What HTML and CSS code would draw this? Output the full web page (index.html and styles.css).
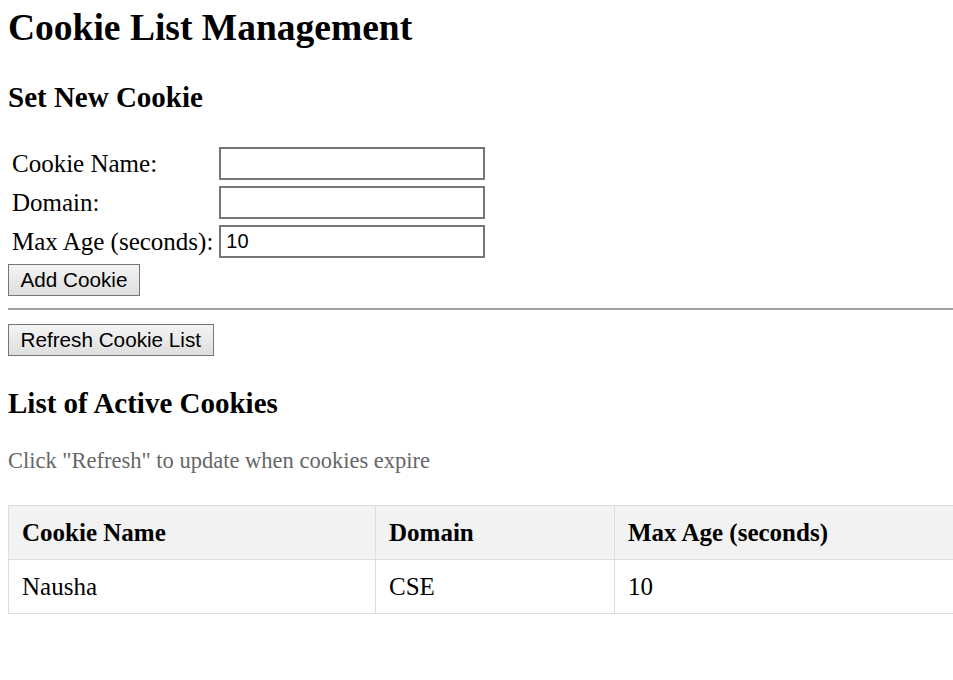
FILE: index.html
```html
<!DOCTYPE html>
<html>
<head>
<meta charset="utf-8">
<title>Cookie List Management</title>
<link rel="stylesheet" href="styles.css">
</head>
<body>
<h1 class="title">Cookie List Management</h1>
<h2 class="section">Set New Cookie</h2>
<form class="cookie-form">
  <table class="form-table">
    <tr><td class="label">Cookie Name:</td><td><input class="field" type="text"></td></tr>
    <tr><td class="label">Domain:</td><td><input class="field" type="text"></td></tr>
    <tr><td class="label">Max Age (seconds):</td><td><input class="field" type="text" value="10"></td></tr>
  </table>
  <div class="btn-row add-row"><button class="btn" type="button">Add Cookie</button></div>
</form>
<hr class="divider">
<div class="btn-row"><button class="btn" type="button">Refresh Cookie List</button></div>
<h2 class="section list-title">List of Active Cookies</h2>
<p class="hint">Click "Refresh" to update when cookies expire</p>
<table class="cookie-table">
  <thead>
    <tr><th class="c1">Cookie Name</th><th class="c2">Domain</th><th>Max Age (seconds)</th></tr>
  </thead>
  <tbody>
    <tr><td>Nausha</td><td>CSE</td><td>10</td></tr>
  </tbody>
</table>
</body>
</html>
```
FILE: styles.css
```css
html { overflow: hidden; }
body {
  margin: 8px -40px 8px 8px;
  font-family: "Liberation Serif", "Times New Roman", serif;
  font-size: 25px;
  color: #000;
  background: #fff;
}
.title {
  font-size: 37.5px;
  font-weight: bold;
  margin: 0;
  line-height: 40px;
}
.section {
  font-size: 29px;
  font-weight: bold;
  margin: 32px 0 0;
  line-height: 34px;
}
.cookie-form { margin: 29px 0 0; }
.form-table {
  border-spacing: 2px;
  margin: 0;
}
.form-table td { padding: 2px; }
.label { line-height: 29px; padding-right: 4px; }
.field {
  display: block;
  width: 255px;
  height: 29px;
  box-sizing: content-box;
  border: 2px solid #767676;
  padding: 0 2px 0 5px;
  font-family: "Liberation Sans", Arial, sans-serif;
  font-size: 20px;
  margin: 0;
}
.btn-row { display: flex; }
.add-row { margin-top: 2px; }
.btn {
  font-family: "Liberation Sans", Arial, sans-serif;
  font-size: 20.7px;
  height: 32px;
  padding: 0 11.5px;
  border: 1px solid #767676;
  border-radius: 0;
  background: linear-gradient(#f4f4f4, #dedede);
  color: #000;
  margin: 0;
}
.divider {
  margin: 12px 0 14px;
  border: 0;
  border-top: 2px solid #a0a0a0;
}
.list-title { margin-top: 30px; }
.hint {
  color: #666;
  font-size: 22.5px;
  margin: 28px 0 0;
  line-height: 26px;
}
.cookie-table {
  margin-top: 31px;
  border-collapse: collapse;
  width: 100%;
}
.cookie-table th, .cookie-table td {
  border: 1px solid #ddd;
  padding: 0 13px;
  height: 53px;
  text-align: left;
}
.cookie-table th { background: #f2f2f2; }
.c1 { width: 340px; }
.c2 { width: 212px; }
```
